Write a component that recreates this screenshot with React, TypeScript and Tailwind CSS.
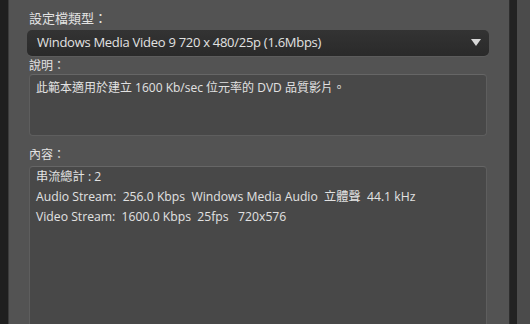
export default function App() {
  const font = { fontFamily: '"Open Sans", "Noto Sans CJK TC", sans-serif' };
  return (
    <div className="w-[530px] h-[324px] flex overflow-hidden bg-[#4a4a4a] text-[#e2e2e2]" style={font}>
      <div className="w-[8px] bg-[#1f1f1f]" />
      <div className="w-[501px] bg-[#535353] border-l border-[#3c3c3c] flex flex-col pl-[18px] pr-[20px]">
        <div className="h-[30px] pt-[9px] pl-[2px] text-[13px] leading-[18px]">設定檔類型：</div>
        <div className="h-[26px] rounded-[5px] bg-gradient-to-b from-[#333] to-[#2a2a2a] flex items-center justify-between pl-[10px] pr-[8px] shadow-[0_1px_0_#5c5c5c]">
          <span className="text-[13px] tracking-[-0.28px]">Windows Media Video 9 720 x 480/25p (1.6Mbps)</span>
          <svg width="10" height="8" viewBox="0 0 10 8"><path d="M0 0h10L5 7z" fill="#d8d8d8" /></svg>
        </div>
        <div className="h-[18px] pl-[2px] pt-[2px] text-[12px] leading-[16px]">說明：</div>
        <div className="ml-[2px] mr-[2px] h-[62px] rounded-[4px] bg-[#484848] border border-[#5e5e5e] border-t-[#666] px-[6px] pt-[4px] text-[12px] leading-[18px]">
          此範本適用於建立 1600 Kb/sec 位元率的 DVD 品質影片。
        </div>
        <div className="h-[30px] pl-[2px] pt-[10px] text-[12px] leading-[18px]">內容：</div>
        <div className="ml-[2px] mr-[2px] flex-1 rounded-t-[4px] bg-[#484848] border border-b-0 border-[#5e5e5e] border-t-[#666] px-[6px] text-[12.2px] leading-[20px] whitespace-pre">
          <div>串流總計 : 2</div>
          <div>Audio Stream:  256.0 Kbps  Windows Media Audio  立體聲  44.1 kHz</div>
          <div>Video Stream:  1600.0 Kbps  25fps   720x576</div>
        </div>
      </div>
      <div className="w-[8px] bg-[#222] border-l border-[#2e2e2e]" />
      <div className="flex-1 bg-[#4b4b4b]" />
    </div>
  );
}
